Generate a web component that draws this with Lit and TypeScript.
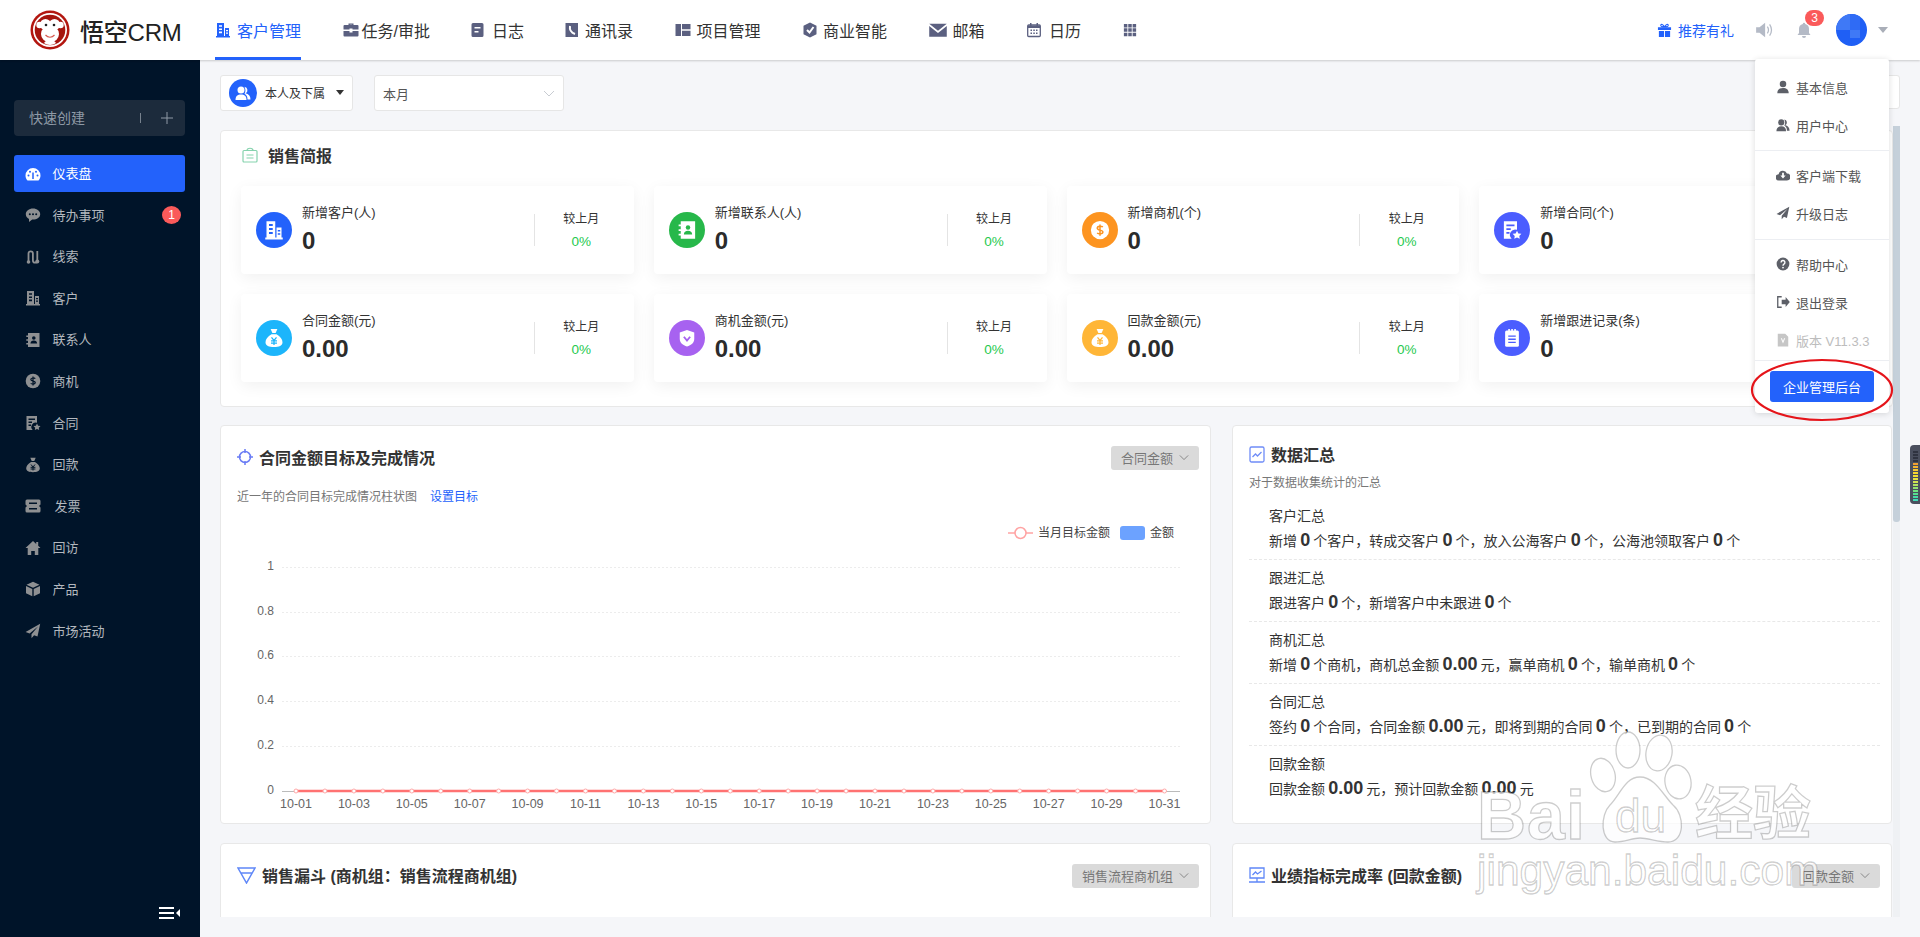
import { LitElement, html, css, svg } from "lit";
import { customElement } from "lit/decorators.js";

const H = "var(--hole,#fff)";
const ICONS: Record<string, unknown> = {
  building: svg`<path fill-rule="evenodd" d="M2 1h7v13h1V6h4v8h1v1.500H1V14h1zM4 3.200v1.600h3V3.200zM4 6.400V8h3V6.400zM4 9.600v1.600h3V9.600zM11 8v1.200h2V8zM11 10.600v1.200h2v-1.200z"/>`,
  briefcase: svg`<path fill-rule="evenodd" d="M5.500 3V1.500h5V3h4a1 1 0 0 1 1 1v3.500h-6v-1h-3v1h-6V4a1 1 0 0 1 1-1zM6.800 3h2.400v-.3H6.800zM.5 9h6v1.500h3V9h6v4.500a1 1 0 0 1-1 1h-13a1 1 0 0 1-1-1z"/>`,
  note: svg`<path transform="translate(-1.500)" fill-rule="evenodd" d="M3.500 1h9A1.500 1.500 0 0 1 14 2.500v11a1.500 1.500 0 0 1-1.500 1.500h-9A1.500 1.500 0 0 1 2 13.500v-11A1.500 1.500 0 0 1 3.500 1zM5 5v1.600h6V5zM5 9v1.600h4V9z"/>`,
  phonebook: svg`<g transform="translate(-1.500)"><path d="M2 1h12.500v14H2z"/><path d="M6.500 4c-.6 3.800 1.500 6.800 5 8" stroke="${H}" stroke-width="2" fill="none"/></g>`,
  book: svg`<path d="M.5 2h5.500v12H.5zM7 2h8.500v5.300H7zM7 8.700h8.500V14H7z"/>`,
  shield: svg`<path d="M8 .5l6.500 3.200v8.600L8 15.500l-6.500-3.200V3.700z"/><path d="M5 8l2.500 2.500L11.500 5" stroke="${H}" stroke-width="2" fill="none"/>`,
  mail: svg`<path d="M.2 2.500h15.600L8 8.600zM.2 4.500L8 10.600l7.800-6.100V14H.2z"/>`,
  calendar: svg`<rect x="1.700" y="3" width="12.600" height="11.500" rx="1" fill="none" stroke="currentColor" stroke-width="1.300"/><path d="M4 1h1.500v3H4zM10.500 1H12v3h-1.500zM2 3.500h12V6H2zM4.500 7.500h1.500V9H4.500zM7.300 7.500h1.500V9H7.300zM10 7.500h1.500V9H10zM4.500 10.500h1.500V12H4.500zM7.300 10.500h1.500V12H7.300zM10 10.500h1.500V12H10z"/>`,
  grid: svg`<path d="M1 1h4v4H1zM6 1h4v4H6zM11 1h4v4h-4zM1 6h4v4H1zM6 6h4v4H6zM11 6h4v4h-4zM1 11h4v4H1zM6 11h4v4H6zM11 11h4v4h-4z"/>`,
  gauge: svg`<path d="M8 2a7.500 7.500 0 0 0-7.500 7.500c0 2 .8 3.600 2 5h11c1.200-1.400 2-3 2-5A7.500 7.500 0 0 0 8 2z"/><circle cx="3.500" cy="9.500" r="1" fill="${H}"/><circle cx="5" cy="5.800" r="1" fill="${H}"/><circle cx="11" cy="5.800" r="1" fill="${H}"/><circle cx="12.500" cy="9.500" r="1" fill="${H}"/><path d="M8 13V6.500" stroke="${H}" stroke-width="1.500"/>`,
  chat: svg`<path d="M8 1.500C4 1.500 .8 4 .8 7.200c0 2 1.200 3.700 3.200 4.700V15l3.200-2.400H8c4 0 7.200-2.300 7.200-5.400S12 1.500 8 1.500z"/><circle cx="4.800" cy="7.200" r="1" fill="${H}"/><circle cx="8" cy="7.200" r="1" fill="${H}"/><circle cx="11.200" cy="7.200" r="1" fill="${H}"/>`,
  lead: svg`<path d="M3.500 13V4.500a2.200 2.200 0 0 1 4.400 0v7a2.200 2.200 0 0 0 4.400 0V2" fill="none" stroke="currentColor" stroke-width="1.800"/><circle cx="3.500" cy="13" r="1.800"/><circle cx="12.300" cy="12.500" r="2"/>`,
  contacts: svg`<path d="M3 1h11.500v14H3zM1.300 3.500h2.500v1.400H1.300zM1.300 7.300h2.500v1.400H1.300zM1.300 11h2.500v1.400H1.300z"/><circle cx="8.800" cy="6" r="1.800" fill="${H}"/><path d="M5.500 11.500c0-2 1.300-3 3.300-3s3.300 1 3.300 3z" fill="${H}"/>`,
  dollar: svg`<circle cx="8" cy="8" r="7.300"/><path d="M10.300 5.600c-1-.9-4.500-1-4.500 1 0 2 4.500 1 4.500 3 0 1.900-3.500 1.700-4.600.8M8 3.500v9" stroke="${H}" stroke-width="1.200" fill="none"/>`,
  contract: svg`<path fill-rule="evenodd" d="M1.500 1H12v6.800a4.300 4.300 0 0 0-4.300 7.200H1.500zM3.500 3.500V5h6.500V3.500zM3.500 6.500V8H7V6.500zM3.500 9.500V11H6V9.500z"/><path d="M12 8.500l1.100 2.200 2.400.3-1.700 1.700.4 2.300-2.200-1.100-2.200 1.100.4-2.300-1.700-1.700 2.400-.3z"/>`,
  bag: svg`<path d="M5.300 .8h5.400L9.300 4H6.700zM6 5h4c3 1.800 4.800 4.200 4.800 6.300C14.800 14 12 15.200 8 15.200S1.200 14 1.200 11.300C1.200 9.200 3 6.800 6 5z"/><path d="M6 7.500l2 2.500 2-2.500M5.600 10.300h4.800M5.600 12h4.800M8 10v3.500" stroke="${H}" stroke-width="1" fill="none"/>`,
  invoice: svg`<path fill-rule="evenodd" d="M2 1.500h12a1.500 1.500 0 0 1 1.500 1.500v3.500L14 8l1.500 1.500V13a1.500 1.500 0 0 1-1.500 1.500H2A1.500 1.500 0 0 1 .5 13V9.500L2 8 .5 6.500V3A1.500 1.500 0 0 1 2 1.500zM4 4.500V6h8V4.500zM4 10v1.500h8V10z"/>`,
  house: svg`<path d="M8 1L.5 8h2.200v7h3.500v-4h3.600v4h3.500V8h2.200l-2.300-2.200V2h-2v1.900z"/>`,
  box: svg`<path d="M8 .8l6.500 3L8 6.800l-6.500-3zM1 5l6.300 2.900v7.300L1 12.200zM15 5l-6.300 2.900v7.300l6.300-3z"/>`,
  plane: svg`<path d="M15.200 .8L.6 9l4 1.600L13 3.500l-6.500 7.700V15.200l2.600-3 3.400 1.400z"/>`,
  user: svg`<circle cx="8" cy="4.500" r="3.700"/><path d="M1.500 15c0-4 2.500-6 6.500-6s6.500 2 6.500 6z"/>`,
  users: svg`<circle cx="6" cy="5" r="3.500"/><path d="M.5 15c0-3.800 2-5.500 5.500-5.500s5.500 1.700 5.500 5.500z"/><path d="M9.500 1.700a3.500 3.500 0 0 1 1 6.600c3 .5 5 2.500 5 6.200h-3c0-3-1-4.500-3-5.800 1-1.500 1.500-4 0-7z"/>`,
  cloud: svg`<path d="M12.500 6.200A5 5 0 0 0 3 7a3.600 3.600 0 0 0 .5 7.200h9a4 4 0 0 0 0-8z"/><path d="M7 5.500h2v3h2L8 12 5 8.500h2z" fill="${H}"/>`,
  help: svg`<circle cx="8" cy="8" r="7.300"/><path d="M5.800 6.200a2.200 2.200 0 1 1 3.300 1.900c-.8.5-1.100.9-1.100 1.800" stroke="${H}" stroke-width="1.600" fill="none"/><circle cx="8" cy="12" r="1" fill="${H}"/>`,
  logout: svg`<path d="M6.500 2H2v12h4.500" fill="none" stroke="currentColor" stroke-width="1.500"/><path d="M6.500 5.500H11V2.300L15.800 8 11 13.700v-3.200H6.500z"/>`,
  version: svg`<path fill-rule="evenodd" d="M2 .8h8.500L14 4.300v11H2zM5.500 6l2.500 6 2.500-6H9.200L8 9.200 6.800 6z"/>`,
  gift: svg`<path d="M1 4.500h14v3H1zM2 8.500h5.500V15H2zM8.500 8.500H14V15H8.500z"/><path d="M8 4.300C6.500 1 4.200 .8 4 2.500 3.900 3.800 6 4.300 8 4.300zM8 4.300c1.500-3.300 3.800-3.500 4-1.800.1 1.300-2 1.800-4 1.800z" fill="none" stroke="currentColor" stroke-width="1.200"/>`,
  speaker: svg`<path d="M1 5.500h3L9 1.500v13l-5-4H1z"/><path d="M11 5c1.200 1.800 1.200 4.200 0 6M13 3c2 3 2 7 0 10" fill="none" stroke="currentColor" stroke-width="1.100"/>`,
  bell: svg`<path d="M8 .8a1.200 1.200 0 0 1 1.200 1.200A5 5 0 0 1 13 7v4l1.500 2h-13L3 11V7a5 5 0 0 1 3.800-5A1.200 1.200 0 0 1 8 .8zM6 14h4a2 2 0 0 1-4 0z"/>`,
  clipboard: svg`<rect x="2.500" y="2" width="11" height="13" rx="1.200"/><path d="M5 .8h1.300v2.500H5zM7.400 .8h1.300v2.500H7.400zM9.800 .8h1.300v2.500H9.800z"/><path d="M5 6.500h6M5 9h6M5 11.500h6" stroke="${H}" stroke-width="1.100"/>`,
  purse: svg`<path d="M8 1.500l5.800 2v5.300c0 3-2.500 5-5.800 6-3.300-1-5.800-3-5.800-6V3.500z"/><path d="M5.500 7l2.500 3 2.500-3" stroke="${H}" stroke-width="1.500" fill="none"/>`,
};

function ic(name: string, size = 16) {
  return html`<svg class="ic" width=${size} height=${size} viewBox="0 0 16 16" fill="currentColor">${ICONS[name]}</svg>`;
}
const chevron = html`<svg class="chev" width="12" height="7" viewBox="0 0 12 7" fill="none" stroke="currentColor" stroke-width="1"><path d="M1 1l5 5 5-5"/></svg>`;

const NAV: [string, string, number, number][] = [
  ["building", "客户管理", 22, 16], ["briefcase", "任务/审批", 19, 16], ["note", "日志", 20.5, 16], ["phonebook", "通讯录", 19.5, 16],
  ["book", "项目管理", 22, 16], ["shield", "商业智能", 21, 16], ["mail", "邮箱", 24, 18], ["calendar", "日历", 23, 16],
];
const MENU = [
  ["gauge", "仪表盘"], ["chat", "待办事项"], ["lead", "线索"], ["building", "客户"], ["contacts", "联系人"], ["dollar", "商机"],
  ["contract", "合同"], ["bag", "回款"], ["invoice", "发票"], ["house", "回访"], ["box", "产品"], ["plane", "市场活动"],
];
const METRICS = [
  ["building", "#2362fb", "新增客户(人)", "0"], ["contacts", "#27b84a", "新增联系人(人)", "0"],
  ["dollar", "#fd9420", "新增商机(个)", "0"], ["contract", "#4b5dff", "新增合同(个)", "0"],
  ["bag", "#1cb5fb", "合同金额(元)", "0.00"], ["purse", "#a762f0", "商机金额(元)", "0.00"],
  ["bag", "#ffb637", "回款金额(元)", "0.00"], ["clipboard", "#4b5dff", "新增跟进记录(条)", "0"],
];
const n = (v: string) => html`<b>${v}</b>`;
const SUMMARY = [
  ["客户汇总", html`新增 ${n("0")} 个客户，转成交客户 ${n("0")} 个，放入公海客户 ${n("0")} 个，公海池领取客户 ${n("0")} 个`],
  ["跟进汇总", html`跟进客户 ${n("0")} 个，新增客户中未跟进 ${n("0")} 个`],
  ["商机汇总", html`新增 ${n("0")} 个商机，商机总金额 ${n("0.00")} 元，赢单商机 ${n("0")} 个，输单商机 ${n("0")} 个`],
  ["合同汇总", html`签约 ${n("0")} 个合同，合同金额 ${n("0.00")} 元，即将到期的合同 ${n("0")} 个，已到期的合同 ${n("0")} 个`],
  ["回款金额", html`回款金额 ${n("0.00")} 元，预计回款金额 ${n("0.00")} 元`],
];
const DD = [
  [["user", "基本信息"], ["users", "用户中心"]],
  [["cloud", "客户端下载"], ["plane", "升级日志"]],
  [["help", "帮助中心"], ["logout", "退出登录"], ["version", "版本 V11.3.3"]],
];
const METER = ["#2f3340","#2f3340","#2f3340","#2f3340","#f0a030","#f5b530","#f5c930","#f5d830","#f0e030","#e6e540","#d0e550","#b0e560","#90e570","#70e580","#55e090","#45dca5","#40d8b5"];

const Y_AXIS: [string, number][] = [["1", 57], ["0.8", 102], ["0.6", 146], ["0.4", 191], ["0.2", 236], ["0", 281]];
const DAYS = Array.from({ length: 31 }, (_, i) => i);
const px = (i: number) => 75 + 28.95 * i;

@customElement("app-root")
export class AppRoot extends LitElement {
  static styles = css`
    :host { display: block; position: relative; width: 1920px; height: 937px; overflow: hidden; background: #f5f6f9; color: #333;
      font-family: "Liberation Sans", "Noto Sans CJK SC", sans-serif; }
    * { box-sizing: border-box; }
    .ic { display: block; flex: none; }
    .chev { display: block; flex: none; }
    .top { position: relative; z-index: 3; height: 60px; background: #fff; display: flex; align-items: center; padding-left: 30px; padding-right: 32px; box-shadow: 0 1px 2px rgba(0,0,0,.18); }
    .brand { width: 185px; flex: none; display: flex; align-items: center; gap: 10px; }
    .brand span { font-size: 24px; font-weight: 500; color: #222; white-space: nowrap; letter-spacing: -.2px; }
    .nav { display: flex; gap: 41.5px; height: 60px; }
    .nav a { display: flex; align-items: center; font-size: 16px; color: #333; height: 60px; border-bottom: 3px solid transparent; padding-top: 2px; white-space: nowrap; }
    .slot { display: block; flex: none; }
    .nav a .ic { color: #5b6080; }
    .nav a.on { color: #2362fb; border-bottom-color: #2362fb; }
    .nav a.on .ic { color: #2362fb; }
    .tools { margin-left: auto; display: flex; align-items: center; }
    .invite { display: flex; align-items: center; gap: 6px; font-size: 14px; color: #2362fb; }
    .speaker { color: #b4bac6; margin-left: 21px; }
    .bell { color: #b4bac6; margin-left: 23px; position: relative; }
    .count { position: absolute; left: 9px; top: -12px; width: 19px; height: 16px; border-radius: 8px; background: #fa5a5a; color: #fff; font-size: 12px; line-height: 16px; text-align: center; }
    .avatar { margin-left: 24px; display: block; flex: none; }
    .caret { margin-left: 11px; width: 0; height: 0; border-left: 5px solid transparent; border-right: 5px solid transparent; border-top: 6px solid #a9aeb8; }

    .body { display: flex; height: 877px; }
    .side { width: 200px; flex: none; background: #001429; padding: 40px 15px 18px 14px; display: flex; flex-direction: column; --hole: #001429; }
    .quick { height: 36px; border-radius: 4px; background: #1c2b3c; display: flex; align-items: center; padding-left: 15px; padding-bottom: 2px; color: #8f9aa6; font-size: 14px; margin-bottom: 19px; }
    .quick i { width: 1px; height: 10px; background: #77828e; margin-left: 55px; margin-top: 2px; }
    .quick svg { margin-left: 20px; margin-top: 2px; }
    .item { height: 37px; margin-bottom: 4.6px; flex: none; display: flex; align-items: center; gap: 12px; padding-left: 10.500px; padding-bottom: 2px; color: #b3b8be; font-size: 13px; border-radius: 3px; position: relative; }
    .item .ic { color: #8e9092; margin-top: 2px; }
    .item.on { background: #2362fb; color: #fff; --hole: #2362fb; }
    .item.on .ic { color: #fff; }
    .item.wide { gap: 14px; }
    .dot { position: absolute; left: 148px; top: 9px; width: 19px; height: 18px; border-radius: 50%; background: #fa5a5a; color: #fff; font-size: 12px; line-height: 18px; text-align: center; }
    .collapse { margin-top: auto; align-self: flex-end; margin-right: 5px; display: block; }

    .main { flex: 1; min-width: 0; padding: 15px 20px 20px; display: flex; flex-direction: column; }
    .filters { display: flex; height: 36px; margin-bottom: 15px; flex: none; }
    .who { width: 133px; background: #fff; border: 1px solid #e6e6e6; border-radius: 3px; display: flex; align-items: center; padding-left: 8px; padding-bottom: 1px; font-size: 12px; color: #333; --hole: #2362fb; }
    .who .disc { width: 28px; height: 28px; border-radius: 50%; background: #2362fb; color: #fff; display: flex; align-items: center; justify-content: center; margin-right: 8px; flex: none; }
    .who em { margin-left: 11px; width: 0; height: 0; border-left: 4px solid transparent; border-right: 4px solid transparent; border-top: 5px solid #333; }
    .month { width: 190px; margin-left: 21px; background: #fff; border: 1px solid #e6e6e6; border-radius: 3px; display: flex; align-items: center; padding: 0 8px 0 8px; font-size: 13px; color: #555; justify-content: space-between; }
    .month .chev { color: #c8ccd2; }
    .extra { margin-left: auto; width: 130px; height: 34px; background: #fff; border: 1px solid #e6e6e6; border-radius: 3px; }

    .scroll { flex: 1; min-height: 0; display: flex; gap: 0; }
    .content { flex: 1; min-width: 0; overflow: hidden; padding-top: 4px; }
    .bar { width: 7px; flex: none; background: #eff1f4; }
    .thumb { height: 396px; background: #c5d0da; border-radius: 0 0 3px 3px; }

    .card { background: #fff; border: 1px solid #e8e8e8; border-radius: 4px; }
    .brief { height: 277px; padding: 0 20px; margin-bottom: 18px; }
    .brief header { height: 55px; display: flex; align-items: center; gap: 10px; padding-left: 1px; padding-bottom: 8px; font-size: 16px; font-weight: 700; color: #333; }
    .metrics { display: grid; grid-template-columns: repeat(4, 1fr); gap: 20px; }
    .metric { height: 88px; border-radius: 4px; background: #fff; box-shadow: 0 4px 16px rgba(0,0,0,.06); display: flex; align-items: center; padding-left: 15px; padding-right: 6px; }
    .disc36 { width: 36px; height: 36px; border-radius: 50%; color: #fff; display: flex; align-items: center; justify-content: center; flex: none; margin-right: 10px; }
    .mtext { flex: 1; min-width: 0; }
    .mtext p { margin: 0; font-size: 13px; line-height: 18px; color: #333; white-space: nowrap; }
    .mtext strong { display: block; margin-top: 4px; font-size: 24px; line-height: 30px; font-weight: 700; color: #2b2b2b; }
    .sep { width: 1px; height: 32px; background: #e4e4e4; flex: none; }
    .cmp { width: 93px; flex: none; text-align: center; font-size: 12px; line-height: 20px; color: #333; }
    .cmp span { display: block; margin-top: 3px; color: #25c94e; font-size: 13.500px; }

    .row { display: grid; grid-template-columns: 991px 660px; column-gap: 21px; margin-bottom: 19px; }
    .tall { height: 399px; }
    .low { height: 200px; }
    .head { display: flex; align-items: center; height: 24px; margin: 20px 11px 0 16px; justify-content: space-between; }
    .head h3 { margin: 0; display: flex; align-items: center; gap: 6px; font-size: 16px; font-weight: 700; color: #333; white-space: nowrap; padding-bottom: 2px; }
    .sel { height: 24px; background: #dadada; border-radius: 3px; display: flex; align-items: center; gap: 6px; padding: 0 10px 1px; font-size: 13px; color: #777; white-space: nowrap; }
    .sel .chev { width: 10px; }
    .sub { margin: 18px 16px 0; font-size: 12px; line-height: 18px; color: #777; display: flex; gap: 13px; }
    .sub a { color: #2362fb; }
    .chart { display: block; margin-top: 4px; }
    .chart text { font-family: "Liberation Sans", "Noto Sans CJK SC", sans-serif; font-size: 12px; fill: #666; }
    .chart .lg { fill: #444; }

    .head.data { margin-top: 17px; }
    .sub.data { margin-top: 7px; }
    .sum { margin: 6px 11px 0 16px; }
    .sum div { height: 62px; padding: 8px 0 0 20px; border-bottom: 1px dashed #e8e8e8; }
    .sum div:last-child { border-bottom: 0; }
    .sum h4 { margin: 0; font-size: 14px; font-weight: 400; line-height: 20px; color: #333; }
    .sum p { margin: 1px 0 0; font-size: 14px; line-height: 26px; color: #333; white-space: nowrap; }
    .sum b { font-size: 18px; font-weight: 700; color: #333; margin: 0 -.75px; }

    .dd { position: absolute; z-index: 5; left: 1755px; top: 59px; width: 134px; height: 354px; background: #fff; border-radius: 3px; box-shadow: 0 1px 6px rgba(0,0,0,.14); --hole: #fff; }
    .dd section { padding: 6px 0; border-bottom: 1px solid #eceef2; }
    .dd section:first-child { padding: 10px 0 5px; }
    .dd section:nth-child(3) { padding-bottom: 0; }
    .dd a { height: 38px; display: flex; align-items: center; gap: 6px; padding-left: 21px; padding-bottom: 2px; font-size: 13px; color: #555; white-space: nowrap; }
    .dd a .ic { color: #5d6068; }
    .dd a.off { color: #bdbdbd; }
    .dd a.off .ic { color: #c6c6c6; --hole: #fff; }
    .admin { margin: 10px auto 0; width: 104px; height: 31px; border-radius: 3px; background: #2362fb; color: #fff; font-size: 13px; display: flex; align-items: center; justify-content: center; }

    .ring { position: absolute; z-index: 6; left: 1749px; top: 357px; }
    .meter { position: absolute; z-index: 6; left: 1910px; top: 445px; width: 10px; height: 59px; border-radius: 4px 0 0 4px; background: #4a4f5e; padding: 6px 2px 0 3px; }
    .meter i { display: block; height: 2px; margin-bottom: 1px; }
    .mark { position: absolute; z-index: 7; left: 1460px; top: 720px; pointer-events: none; }
    .mark * { fill: rgba(255,255,255,.74); stroke: rgba(0,0,0,.2); stroke-width: 1.300; }
    .mark text { font-family: "Liberation Sans", "Noto Sans CJK SC", sans-serif; }
  `;

  private logo() {
    return html`<svg width="40" height="40" viewBox="0 0 40 40" style="display:block;flex:none">
      <circle cx="20" cy="20" r="19.500" fill="#b3160f"/><circle cx="20" cy="20" r="17" fill="#fff"/><circle cx="20" cy="20" r="15.300" fill="#a5150e"/>
      <circle cx="9.500" cy="15" r="3.200" fill="#fff"/><circle cx="30.500" cy="15" r="3.200" fill="#fff"/>
      <circle cx="15.500" cy="14.500" r="5.500" fill="#fff"/><circle cx="24.500" cy="14.500" r="5.500" fill="#fff"/>
      <ellipse cx="20" cy="24" rx="9" ry="8.500" fill="#fff"/><path d="M14 33c2-4 10-4 12 0-3 2.500-9 2.500-12 0z" fill="#fff"/>
      <circle cx="16" cy="15" r="1.300" fill="#222"/><circle cx="24" cy="15" r="1.300" fill="#222"/>
      <path d="M15.500 25c2.500 3 6.500 3 9 0" stroke="#d65a50" stroke-width="1.200" fill="none"/></svg>`;
  }

  private chart() {
    return html`<svg class="chart" width="989" height="310" viewBox="0 0 989 310">
      ${Y_AXIS.slice(0, 5).map(([, y]) => svg`<line x1="61" x2="959" y1=${y + 0.5} y2=${y + 0.5} stroke="#ececec" stroke-dasharray="2 2"/>`)}
      <line x1="61" x2="959" y1="281.500" y2="281.500" stroke="#bbb"/>
      ${Y_AXIS.map(([t, y]) => svg`<text x="53" y=${y + 3} text-anchor="end">${t}</text>`)}
      <line x1=${px(0)} x2=${px(30)} y1="281" y2="281" stroke="#ff7272" stroke-width="2.500"/>
      ${DAYS.map((i) => svg`<circle cx=${px(i)} cy="281" r="2" fill="#fff" stroke="#ffa9a9" stroke-width="1"/>`)}
      ${DAYS.filter((i) => i % 2 === 0).map((i) => svg`<text x=${px(i)} y="298" text-anchor="middle" style="font-size:12.500px">10-${String(i + 1).padStart(2, "0")}</text>`)}
      <line x1="787" x2="812" y1="23" y2="23" stroke="#ffa3a3" stroke-width="1.500"/>
      <circle cx="799.500" cy="23" r="5.500" fill="#fff" stroke="#ffa3a3" stroke-width="1.500"/>
      <text class="lg" x="817" y="27">当月目标金额</text>
      <rect x="899" y="16" width="25" height="14" rx="3" fill="#6ca2ff"/>
      <text class="lg" x="929" y="27">金额</text>
    </svg>`;
  }

  render() {
    return html`
      <div class="top">
        <div class="brand">${this.logo()}<span>悟空CRM</span></div>
        <nav class="nav">
          ${NAV.map(([i, t, w, s], k) => html`<a class=${k === 0 ? "on" : ""}><span class="slot" style="width:${w}px">${ic(i, s)}</span>${t}</a>`)}
          <a>${ic("grid", 14)}</a>
        </nav>
        <div class="tools">
          <div class="invite">${ic("gift", 15)}推荐有礼</div>
          <div class="speaker">${ic("speaker", 18)}</div>
          <div class="bell">${ic("bell", 16)}<span class="count">3</span></div>
          <svg class="avatar" width="31" height="32" viewBox="0 0 31 32"><defs><clipPath id="av"><ellipse cx="15.500" cy="16" rx="15.500" ry="16"/></clipPath></defs>
            <g clip-path="url(#av)"><rect width="31" height="32" fill="#1f5ff5"/><rect x="0" y="0" width="14" height="16" fill="#3f79f6"/><rect x="14" y="16" width="10" height="8" fill="#3f79f6"/><rect x="14" y="0" width="10" height="16" fill="#2f6bf5"/></g></svg>
          <div class="caret"></div>
        </div>
      </div>
      <div class="body">
        <aside class="side">
          <div class="quick">快速创建<i></i>
            <svg width="12" height="12" viewBox="0 0 12 12" stroke="#8f9aa6" stroke-width="1"><path d="M6 0v12M0 6h12"/></svg></div>
          ${MENU.map(([i, t], k) => html`<div class="item ${k === 0 ? "on" : ""} ${t === "发票" ? "wide" : ""}">${ic(i)}${t}${k === 1 ? html`<span class="dot">1</span>` : ""}</div>`)}
          <svg class="collapse" width="21" height="12" viewBox="0 0 21 12" fill="#fff"><path d="M0 0h15v2H0zM0 5h15v2H0zM0 10h15v2H0zM21 2v8l-4-4z"/></svg>
        </aside>
        <main class="main">
          <div class="filters">
            <div class="who"><span class="disc">${ic("users", 16)}</span>本人及下属<em></em></div>
            <div class="month">本月${chevron}</div>
            <div class="extra"></div>
          </div>
          <div class="scroll">
            <div class="content">
              <section class="card brief">
                <header>
                  <svg width="16" height="16" viewBox="0 0 16 16" fill="none" stroke="#86d3ae" stroke-width="1.200"><rect x="1" y="3.500" width="14" height="11.500" rx="1"/><path d="M5 3.500c0-3 6-3 6 0M4.500 8h7M4.500 11h7"/></svg>
                  销售简报
                </header>
                <div class="metrics">
                  ${METRICS.map(([i, c, l, v]) => html`<div class="metric">
                    <span class="disc36" style="background:${c};--hole:${c}">${ic(i, 20)}</span>
                    <div class="mtext"><p>${l}</p><strong>${v}</strong></div>
                    <i class="sep"></i>
                    <div class="cmp">较上月<span>0%</span></div>
                  </div>`)}
                </div>
              </section>
              <div class="row">
                <section class="card tall">
                  <div class="head"><h3>
                    <svg width="16" height="18" viewBox="0 0 16 18" fill="none" stroke="#6a7cf5" stroke-width="1.500"><circle cx="8" cy="9" r="5.500"/><path d="M8 1v4M8 13v4M0 9h4M12 9h4"/></svg>
                    合同金额目标及完成情况</h3><div class="sel">合同金额${chevron}</div></div>
                  <div class="sub">近一年的合同目标完成情况柱状图<a>设置目标</a></div>
                  ${this.chart()}
                </section>
                <section class="card tall">
                  <div class="head data"><h3>
                    <svg width="16" height="18" viewBox="0 0 16 18" fill="none" stroke="#6f8cf7" stroke-width="1.300"><rect x="1" y="2" width="14" height="15" rx="1.500"/><path d="M3.500 12l3-3 2 2 4-4"/></svg>
                    数据汇总</h3></div>
                  <div class="sub data">对于数据收集统计的汇总</div>
                  <div class="sum">${SUMMARY.map(([a, b]) => html`<div><h4>${a}</h4><p>${b}</p></div>`)}</div>
                </section>
              </div>
              <div class="row">
                <section class="card low">
                  <div class="head"><h3>
                    <svg width="19" height="17" viewBox="0 0 19 17" fill="none" stroke="#5f87f8" stroke-width="1.500"><path d="M1 1h17l-8.500 15zM4 6h11"/></svg>
                    销售漏斗 (商机组：销售流程商机组)</h3><div class="sel">销售流程商机组${chevron}</div></div>
                </section>
                <section class="card low">
                  <div class="head"><h3>
                    <svg width="16" height="18" viewBox="0 0 16 18" fill="none" stroke="#5f87f8" stroke-width="1.300"><path d="M1 2h14v10H1zM0 16h16M8 12v4M3.500 9l3-3 2 2 4-3"/></svg>
                    业绩指标完成率 (回款金额)</h3><div class="sel">回款金额${chevron}</div></div>
                </section>
              </div>
            </div>
            <div class="bar"><div class="thumb"></div></div>
          </div>
        </main>
      </div>

      <div class="dd">
        ${DD.map((g) => html`<section>${g.map(([i, t]) => html`<a class=${i === "version" ? "off" : ""}>${ic(i, 14)}${t}</a>`)}</section>`)}
        <div class="admin">企业管理后台</div>
      </div>
      <svg class="ring" width="146" height="66" viewBox="0 0 146 66" fill="none"><ellipse cx="73" cy="33" rx="70" ry="30" stroke="#e5141a" stroke-width="2.200"/></svg>
      <div class="meter">${METER.map((c) => html`<i style="background:${c}"></i>`)}</div>
      <svg class="mark" width="370" height="190" viewBox="0 0 370 190">
        <ellipse cx="143" cy="55" rx="12" ry="17" transform="rotate(-15 143 55)"/>
        <ellipse cx="168" cy="30" rx="12" ry="18"/>
        <ellipse cx="199" cy="33" rx="13" ry="18" transform="rotate(10 199 33)"/>
        <ellipse cx="218" cy="62" rx="13" ry="17" transform="rotate(-10 218 62)"/>
        <path d="M180 57C165 57 160 75 150 85c-10 10-10 37 5 37 10 0 17-4 25-4s18 4 28 4c17 0 17-27 5-37-10-10-18-28-33-28z"/>
        <text x="17" y="119" font-size="68" font-weight="700" letter-spacing="1">Bai</text>
        <text x="155" y="112" font-size="46">du</text>
        <text x="235" y="114" font-size="58" font-weight="700">经验</text>
        <text x="17" y="165" font-size="42.500">jingyan.baidu.com</text>
      </svg>
    `;
  }
}
